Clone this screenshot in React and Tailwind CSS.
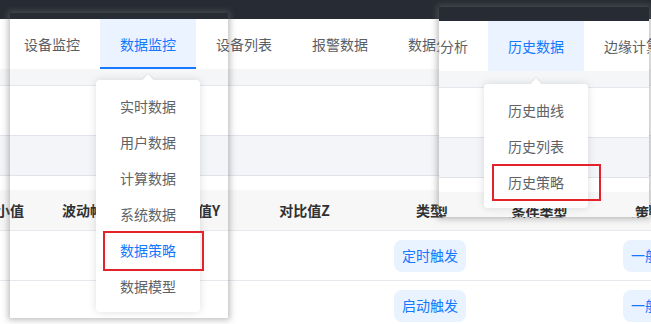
import React from 'react';

const FONT = { fontFamily: "'Noto Sans CJK SC', 'Noto Sans', sans-serif" };
const navItems = ['设备监控', '数据监控', '设备列表', '报警数据', '数据分析', '历史数据', '边缘计算'];
const cols = [
  { w: 'w-[80px]', h: '最小值' },
  { w: 'w-[94px]', h: '波动幅度' },
  { w: 'w-[116px]', h: '对比值Y' },
  { w: 'w-[103px]', h: '对比值Z' },
  { w: 'w-[148px]', h: '类型' },
  { w: 'w-[63px]', h: '条件类型' },
  { w: 'w-[184px]', h: '策略类型' },
];

function Tag({ children }) {
  return (
    <div className="w-[72px] h-[32px] rounded-[8px] bg-[#e8f3ff] text-[#1677ff] text-[14px] flex items-center justify-center shrink-0 whitespace-nowrap overflow-hidden">
      {children}
    </div>
  );
}

function Row({ type, strat }) {
  return (
    <div className="h-[50px] border-t border-[#e6e8ee] flex items-center ml-[-37px] shrink-0">
      {cols.map((c, i) => (
        <div key={i} className={`${c.w} shrink-0 flex justify-center`}>
          {i === 4 ? <Tag>{type}</Tag> : i === 6 ? <Tag>{strat}</Tag> : null}
        </div>
      ))}
    </div>
  );
}

function Page({ active, underline }) {
  return (
    <div className="w-[651px] h-[340px] bg-white flex flex-col overflow-hidden" style={FONT}>
      <div className="h-[19px] bg-[#272b34] shrink-0" />
      <div className="h-[50px] flex pl-[4px] shrink-0">
        {navItems.map((t, i) => (
          <div
            key={t}
            className={
              'w-[96px] shrink-0 flex items-center justify-center text-[14px] whitespace-nowrap ' +
              (i === active ? 'bg-[#eaf3ff] text-[#1677ff] ' : 'text-[#5a5e66] ') +
              (i === active && underline ? 'border-b-2 border-[#1677ff] pt-[2px]' : '')
            }
          >
            {t}
          </div>
        ))}
      </div>
      <div className="h-[17px] bg-[#f5f6f8] border-b border-[#e4e7ed] shrink-0" />
      <div className="h-[49px] shrink-0" />
      <div className="h-[41px] bg-[#f4f5f9] border-y border-[#e1e3ea] shrink-0" />
      <div className="h-[14px] shrink-0" />
      <div className="h-[40px] bg-[#f7f7f8] flex items-center ml-[-37px] shrink-0">
        {cols.map((c, i) => (
          <div key={i} className={`${c.w} shrink-0 flex justify-center text-[14px] font-bold text-[#303133] whitespace-nowrap`}>
            {c.h}
          </div>
        ))}
      </div>
      <Row type="定时触发" strat="一般策略" />
      <Row type="启动触发" strat="一般策略" />
    </div>
  );
}

function Menu({ items, activeIdx, className }) {
  return (
    <div className={`absolute bg-white rounded-[4px] shadow-[0_0_8px_rgba(0,0,0,0.13)] py-[8px] w-[104px] ${className}`} style={FONT}>
      <div className="absolute left-[48px] top-[-4px] w-[8px] h-[8px] bg-white rotate-45 shadow-[-1px_-1px_2px_rgba(0,0,0,0.06)]" />
      {items.map((t, i) => (
        <div
          key={t}
          className={`relative h-[36px] pl-[24px] flex items-center text-[14px] whitespace-nowrap ${i === activeIdx ? 'text-[#1677ff]' : 'text-[#606266]'}`}
        >
          {t}
        </div>
      ))}
    </div>
  );
}

export default function App() {
  return (
    <div className="relative w-[651px] h-[324px] overflow-hidden bg-white">
      <Page active={1} underline />
      {/* panel 1 frame */}
      <div className="absolute left-[10px] top-[13px] w-[218px] h-[305px] shadow-[0_0_6px_2px_rgba(110,110,110,0.45)] pointer-events-none" />
      <Menu
        items={['实时数据', '用户数据', '计算数据', '系统数据', '数据策略', '数据模型']}
        activeIdx={4}
        className="left-[96px] top-[80px]"
      />
      <div className="absolute left-[103px] top-[231px] w-[101px] h-[40px] border-2 border-[#e3222b]" />

      {/* panel 2 */}
      <div className="absolute left-[439px] top-[7px] w-[210px] h-[210px] overflow-hidden bg-white shadow-[0_0_6px_2px_rgba(110,110,110,0.45)]">
        <div className="absolute left-[-435px] top-[-5px]">
          <Page active={5} underline={false} />
        </div>
        <Menu items={['历史曲线', '历史列表', '历史策略']} activeIdx={-1} className="left-[45px] top-[77px]" />
        <div className="absolute left-[53px] top-[157px] w-[109px] h-[37px] border-2 border-[#e3222b]" />
      </div>
    </div>
  );
}
